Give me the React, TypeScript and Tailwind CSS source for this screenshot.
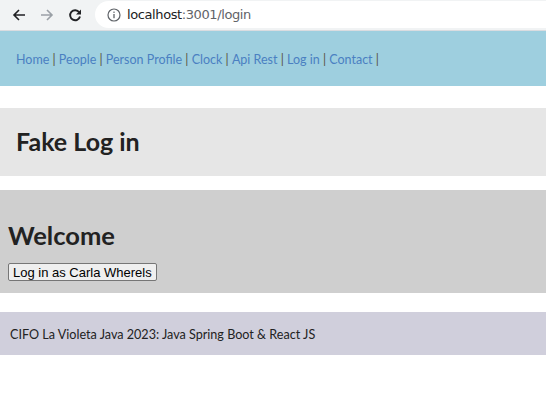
import React from "react";

const links = ["Home", "People", "Person Profile", "Clock", "Api Rest", "Log in", "Contact"];

export default function App() {
  return (
    <div className="w-[546px] h-[395px] bg-white overflow-hidden" style={{ fontFamily: "Lato, sans-serif" }}>
      {/* browser chrome */}
      <div className="h-[31px] bg-[#f1f3f4] border-b border-[#dadce0] flex items-center">
        <div className="flex items-center w-[95px] pl-[5px]">
          <div className="w-[28px] flex justify-center">
            <svg width="14" height="14" viewBox="0 0 14 14" className="text-[#202124]">
              <path d="M13 7H2M7 2L2 7l5 5" stroke="currentColor" strokeWidth="1.6" fill="none" />
            </svg>
          </div>
          <div className="w-[28px] flex justify-center">
            <svg width="14" height="14" viewBox="0 0 14 14" className="text-[#9aa0a6]">
              <path d="M1 7h11M7 2l5 5-5 5" stroke="currentColor" strokeWidth="1.6" fill="none" />
            </svg>
          </div>
          <div className="w-[28px] flex justify-center">
            <svg width="14" height="14" viewBox="0 0 14 14" className="text-[#202124]">
              <path d="M11.2 4.3A5 5 0 1 0 12 8.5" stroke="currentColor" strokeWidth="1.9" fill="none" />
              <path d="M13 1.5v5H8z" fill="currentColor" />
            </svg>
          </div>
        </div>
        <div className="flex-1 h-[27px] bg-white rounded-l-full flex items-center pl-[12px] mt-[-1px]">
          <svg width="14" height="14" viewBox="0 0 14 14" className="text-[#5f6368]">
            <circle cx="7" cy="7" r="6" stroke="currentColor" strokeWidth="1.2" fill="none" />
            <rect x="6.35" y="6" width="1.3" height="4.2" fill="currentColor" />
            <rect x="6.35" y="3.6" width="1.3" height="1.3" fill="currentColor" />
          </svg>
          <span className="ml-[6px] text-[13px] text-[#202124]" style={{ fontFamily: "'DejaVu Sans', sans-serif", letterSpacing: "-0.4px" }}>
            localhost<span className="text-[#5f6368]">:3001/login</span>
          </span>
        </div>
      </div>

      {/* nav */}
      <nav className="bg-[#9ecfdf] h-[55px] flex items-center pl-[16px] pt-[3px] text-[12.5px] whitespace-pre">
        {links.map((l) => (
          <React.Fragment key={l}>
            <a className="text-[#4a80c2]">{l}</a>
            <span className="text-[#5a5340]">{" | "}</span>
          </React.Fragment>
        ))}
      </nav>

      <div className="mt-[22px] bg-[#e6e6e6] h-[68px] flex items-center pl-[16px]">
        <h2 className="text-[25px] font-bold text-[#222]">Fake Log in</h2>
      </div>

      <div className="mt-[14px] bg-[#cfcfcf] h-[103px] pl-[8px] pt-[29px]">
        <h2 className="text-[25.5px] font-bold text-[#222] leading-[32px]">Welcome</h2>
        <button
          className="mt-[12px] h-[18px] px-[4px] bg-[#efefef] border border-[#767676] rounded-[2px] text-[13px] text-black leading-none"
          style={{ fontFamily: "'Liberation Sans', Arial, sans-serif" }}
        >
          Log in as Carla Wherels
        </button>
      </div>

      <div className="mt-[19px] bg-[#d0cfdc] h-[43px] flex items-center pl-[10px] pt-[3px] text-[12.6px] text-[#222]">
        CIFO La Violeta Java 2023: Java Spring Boot &amp; React JS
      </div>
    </div>
  );
}
